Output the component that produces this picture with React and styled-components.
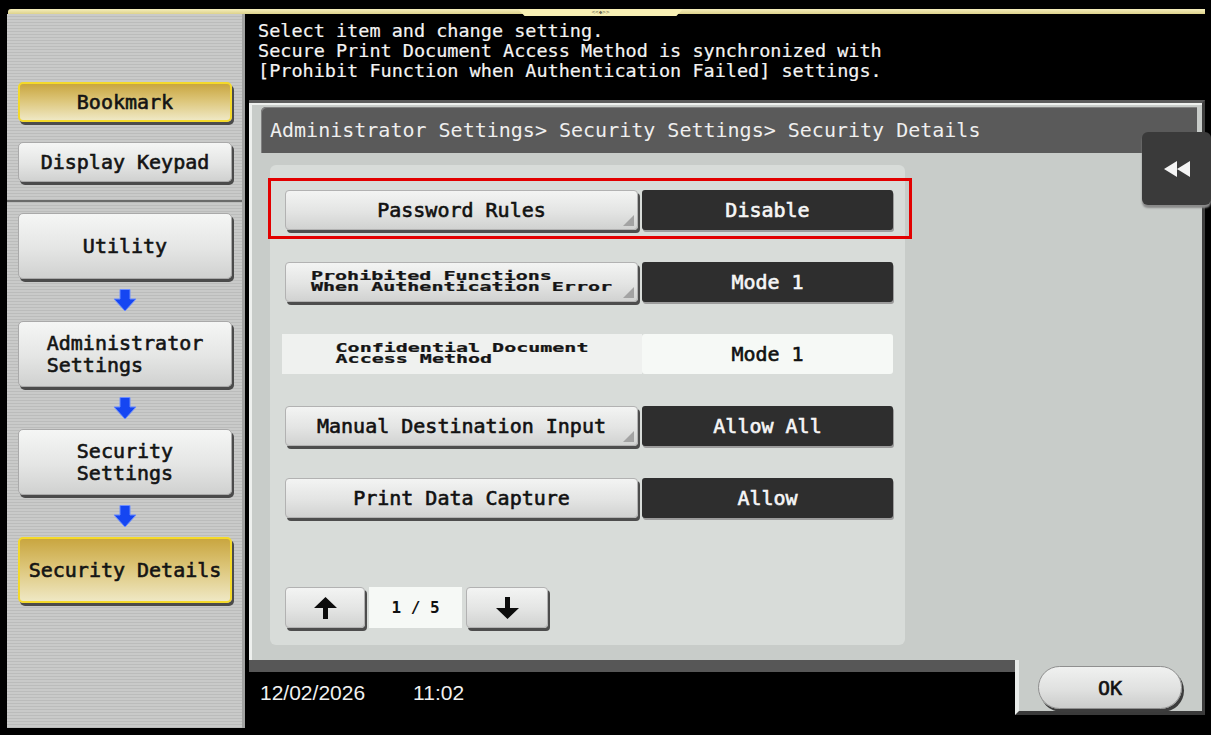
import React from "react";
import styled, { createGlobalStyle } from "styled-components";

const MONO = `"DejaVu Sans Mono", "Liberation Mono", monospace`;

const GlobalStyle = createGlobalStyle`
  html, body {
    margin: 0;
    padding: 0;
    background: #000;
  }
  body {
    font-family: ${MONO};
  }
`;

const Screen = styled.div`
  width: 1211px;
  height: 735px;
  box-sizing: border-box;
  padding: 9px 6px 0 7px;
  background: #000;
  display: flex;
  flex-direction: column;
  overflow: hidden;
`;

const Rail = styled.div`
  height: 5px;
  margin-left: 1px;
  border-radius: 3px 0 0 0;
  background: linear-gradient(#f5eebb, #ddd28c);
  display: flex;
  justify-content: center;
  align-items: flex-start;
`;

const RailTab = styled.div`
  width: 165px;
  height: 7px;
  margin-left: -12px;
  background: #f8f0b4;
  clip-path: polygon(0 0, 100% 0, 96% 100%, 4% 100%);
  color: #6e6a52;
  font: 6px/6px ${MONO};
  text-align: center;
`;

const Main = styled.div`
  display: flex;
  gap: 4px;
  height: 714px;
`;

/* ---------- left navigation ---------- */

const LeftPanel = styled.aside`
  width: 238px;
  box-sizing: border-box;
  display: flex;
  flex-direction: column;
  background: repeating-linear-gradient(180deg, #c9cac9 0 2px, #bbbcbb 2px 3px);
  border-right: 3px solid #a2a3a2;
`;

const NavTop = styled.div`
  height: 188px;
  box-sizing: border-box;
  padding: 68px 0 0 11px;
  display: flex;
  flex-direction: column;
  gap: 20px;
  border-bottom: 2px solid #6a6b6a;
`;

const NavBottom = styled.div`
  padding: 11px 0 0 11px;
  display: flex;
  flex-direction: column;
`;

const SideButton = styled.div`
  width: 214px;
  height: ${(p) => p.$h}px;
  box-sizing: border-box;
  display: flex;
  align-items: center;
  justify-content: center;
  border-radius: 5px;
  color: #141414;
  font: 20px/22px ${MONO};
  -webkit-text-stroke: 0.6px #141414;
  white-space: pre;
  box-shadow: 2px 3px 0 #4b4b4b;
  border: ${(p) => (p.$active ? "2px solid #f4d92a" : "1px solid #a9a9a9")};
  background: ${(p) =>
    p.$active
      ? "linear-gradient(180deg, #c9a640 0%, #dcc578 45%, #efe8c4 100%)"
      : "linear-gradient(180deg, #f5f6f5 0%, #e4e5e4 55%, #d0d1d0 100%)"};

  span {
    display: inline-block;
    text-align: left;
  }
`;

const ArrowSlot = styled.div`
  width: 214px;
  height: 42px;
  display: flex;
  align-items: center;
  justify-content: center;
`;

const BlueArrow = () => (
  <svg width="24" height="23" viewBox="0 0 24 23">
    <path d="M7 0.5 H17 V10 H23 L12 22 L1 10 H7 Z" fill="#1546f2" stroke="#6b8cff" strokeWidth="1" />
  </svg>
);

/* ---------- right column ---------- */

const RightCol = styled.section`
  width: 956px;
  display: flex;
  flex-direction: column;
`;

const Message = styled.div`
  height: 86px;
  box-sizing: border-box;
  padding: 7px 0 0 9px;
  color: #f4f4f4;
  font: 18.5px/20px ${MONO};
  -webkit-text-stroke: 0.2px #f4f4f4;
  white-space: pre;
`;

const Panel = styled.div`
  position: relative;
  display: flex;
  flex-direction: column;
`;

const TopSection = styled.div`
  border-top: 3px solid #5b5b5b;
  border-right: 3px solid #3e3e3e;
  background: #c8ccc9;
  box-shadow: inset 3px 2px 0 #eef0ee;
  padding: 4px 5px 15px 12px;
`;

const Header = styled.div`
  height: 46px;
  box-sizing: border-box;
  padding-left: 9px;
  display: flex;
  align-items: center;
  background: #5a5a5a;
  border-radius: 5px 0 0 0;
  box-shadow: inset 1px 1px 0 #808080;
  color: #efefef;
  font: 20px/22px ${MONO};
  white-space: pre;
`;

const Content = styled.div`
  margin-top: 12px;
  display: flex;
`;

const ListArea = styled.div`
  width: 635px;
  height: 480px;
  box-sizing: border-box;
  margin-left: 9px;
  padding: 25px 12px 17px 15px;
  border-radius: 6px;
  background: #d8dcd9;
  display: flex;
  flex-direction: column;
  gap: 32px;
`;

const Row = styled.div`
  position: relative;
  height: 40px;
  display: grid;
  grid-template-columns: 353px 251px;
  column-gap: 4px;

  ${(p) =>
    p.$highlight &&
    `
    &::after {
      content: "";
      position: absolute;
      inset: -12px -19px -9px -17px;
      border: 3px solid #e20000;
      pointer-events: none;
      z-index: 1;
    }
  `}
`;

const LabelButton = styled.div`
  position: relative;
  display: flex;
  align-items: center;
  justify-content: center;
  border-radius: 4px;
  border: 1px solid #b2b2b2;
  background: linear-gradient(180deg, #f3f4f3 0%, #e3e4e3 55%, #d1d2d1 100%);
  box-shadow: 2px 3px 0 #4d4d4d;
  color: #111;
  font: 20px/22px ${MONO};
  -webkit-text-stroke: 0.6px #111;
  white-space: pre;

  ${(p) =>
    p.$more &&
    `
    &::after {
      content: "";
      position: absolute;
      right: 3px;
      bottom: 3px;
      border-style: solid;
      border-width: 0 0 11px 11px;
      border-color: transparent transparent #a3a3a3 transparent;
    }
  `}
`;

const FlatLabel = styled.div`
  margin: 0 -4px 0 -3px;
  display: flex;
  align-items: center;
  justify-content: center;
  background: #eff1ef;
`;

const SquashText = styled.span`
  display: inline-block;
  transform: scaleY(0.58);
  color: #151515;
  font: bold 20px/19px ${MONO};
  -webkit-text-stroke: 0.4px #151515;
  text-align: left;
  white-space: pre;
`;

const Value = styled.div`
  display: flex;
  align-items: center;
  justify-content: center;
  border-radius: 3px;
  background: ${(p) => (p.$light ? "#f6f9f6" : "#2e2e2e")};
  color: ${(p) => (p.$light ? "#111" : "#f6f6f6")};
  -webkit-text-stroke: 0.6px ${(p) => (p.$light ? "#111" : "#f6f6f6")};
  box-shadow: ${(p) => (p.$light ? "none" : "1px 2px 0 #9c9c9c")};
  font: 20px/22px ${MONO};
  white-space: pre;
`;

const Pager = styled.div`
  margin-top: auto;
  height: 41px;
  display: flex;
  gap: 4px;
`;

const PagerButton = styled.div`
  width: ${(p) => p.$w}px;
  display: flex;
  align-items: center;
  justify-content: center;
  border-radius: 4px;
  border: 1px solid #b2b2b2;
  background: linear-gradient(180deg, #f3f4f3 0%, #e3e4e3 55%, #d1d2d1 100%);
  box-shadow: 2px 3px 0 #4d4d4d;
`;

const PageBox = styled.div`
  width: 93px;
  display: flex;
  align-items: center;
  justify-content: center;
  background: #f6f9f6;
  color: #111;
  font: bold 16px/18px ${MONO};
  white-space: pre;
`;

const BlackArrow = ({ down }) => (
  <svg width="23" height="22" viewBox="0 0 23 22" style={down ? { transform: "rotate(180deg)" } : undefined}>
    <path d="M11.5 0 L23 11 H14 V22 H9 V11 H0 Z" fill="#0c0c0c" />
  </svg>
);

const BackTab = styled.div`
  position: absolute;
  top: 32px;
  right: -6px;
  width: 69px;
  height: 73px;
  display: flex;
  align-items: center;
  justify-content: center;
  border-radius: 6px;
  background: #3a3a3a;
  box-shadow: 0 3px 2px #8a8a8a;
`;

const BottomRow = styled.div`
  height: 55px;
  display: flex;
`;

const Footer = styled.div`
  flex: 1;
  border-top: 12px solid #575757;
  padding: 10px 0 0 11px;
  display: flex;
  gap: 48px;
  color: #f0f0f0;
  font: 21px/22px "Liberation Sans", Arial, sans-serif;
`;

const OkArea = styled.div`
  width: 190px;
  box-sizing: border-box;
  padding: 6px 0 0 19px;
  background: #c8ccc9;
  border-left: 4px solid #e9ecea;
  border-right: 3px solid #3e3e3e;
  border-bottom: 4px solid #3a3a3a;
`;

const OkButton = styled.div`
  width: 144px;
  height: 43px;
  box-sizing: border-box;
  display: flex;
  align-items: center;
  justify-content: center;
  border-radius: 22px;
  border: 1px solid #8f8f8f;
  background: linear-gradient(180deg, #f0f1f0 0%, #e0e1e0 55%, #cbcccb 100%);
  box-shadow: 2px 3px 0 #3c3c3c;
  color: #111;
  font: 20px/22px ${MONO};
  -webkit-text-stroke: 0.6px #111;
`;

const rows = [
  { label: "Password Rules", value: "Disable", more: true, highlight: true },
  { small: "Prohibited Functions\nWhen Authentication Error", value: "Mode 1", more: true },
  { small: "Confidential Document\nAccess Method", value: "Mode 1", flat: true },
  { label: "Manual Destination Input", value: "Allow All", more: true },
  { label: "Print Data Capture", value: "Allow" },
];

export default function App() {
  return (
    <>
      <GlobalStyle />
      <Screen>
        <Rail>
          <RailTab>{"<<◆>>"}</RailTab>
        </Rail>
        <Main>
          <LeftPanel>
            <NavTop>
              <SideButton $h={40} $active>Bookmark</SideButton>
              <SideButton $h={40}>Display Keypad</SideButton>
            </NavTop>
            <NavBottom>
              <SideButton $h={66}>Utility</SideButton>
              <ArrowSlot><BlueArrow /></ArrowSlot>
              <SideButton $h={66}><span>{"Administrator\nSettings"}</span></SideButton>
              <ArrowSlot><BlueArrow /></ArrowSlot>
              <SideButton $h={66}><span>{"Security\nSettings"}</span></SideButton>
              <ArrowSlot><BlueArrow /></ArrowSlot>
              <SideButton $h={66} $active>Security Details</SideButton>
            </NavBottom>
          </LeftPanel>

          <RightCol>
            <Message>
              {"Select item and change setting.\nSecure Print Document Access Method is synchronized with\n[Prohibit Function when Authentication Failed] settings."}
            </Message>
            <Panel>
              <TopSection>
                <Header>Administrator Settings&gt; Security Settings&gt; Security Details</Header>
                <Content>
                  <ListArea>
                    {rows.map((r, i) => (
                      <Row key={i} $highlight={r.highlight}>
                        {r.flat ? (
                          <FlatLabel>
                            <SquashText>{r.small}</SquashText>
                          </FlatLabel>
                        ) : (
                          <LabelButton $more={r.more}>
                            {r.small ? <SquashText>{r.small}</SquashText> : r.label}
                          </LabelButton>
                        )}
                        <Value $light={r.flat}>{r.value}</Value>
                      </Row>
                    ))}
                    <Pager>
                      <PagerButton $w={78}><BlackArrow /></PagerButton>
                      <PageBox>1 / 5</PageBox>
                      <PagerButton $w={80}><BlackArrow down /></PagerButton>
                    </Pager>
                  </ListArea>
                </Content>
              </TopSection>
              <BottomRow>
                <Footer>
                  <span>12/02/2026</span>
                  <span>11:02</span>
                </Footer>
                <OkArea>
                  <OkButton>OK</OkButton>
                </OkArea>
              </BottomRow>
              <BackTab>
                <svg width="26" height="16" viewBox="0 0 26 16">
                  <path d="M0 8 L13 0 V16 Z M13 8 L26 0 V16 Z" fill="#f4f4f4" />
                </svg>
              </BackTab>
            </Panel>
          </RightCol>
        </Main>
      </Screen>
    </>
  );
}
